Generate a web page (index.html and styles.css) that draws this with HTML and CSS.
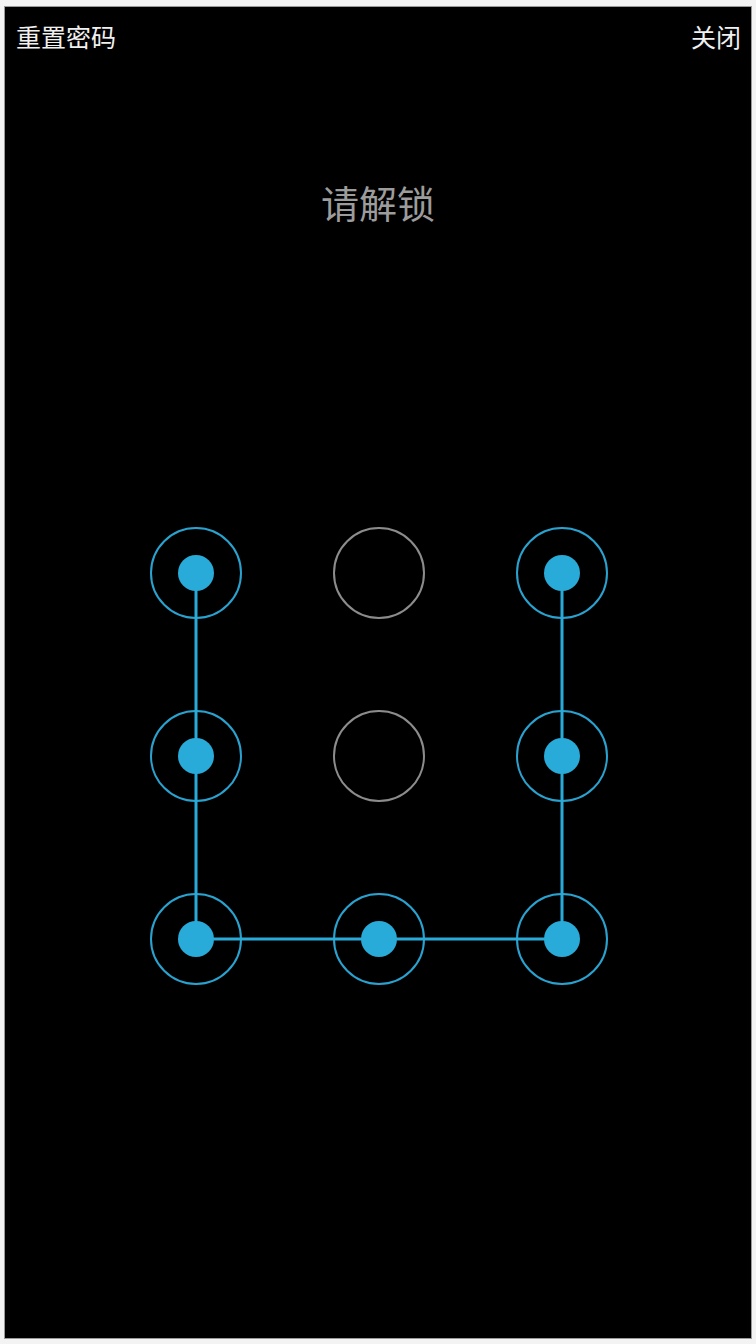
FILE: index.html
```html
<!DOCTYPE html>
<html lang="zh">
<head>
<meta charset="utf-8">
<title>请解锁</title>
<link rel="stylesheet" href="styles.css">
</head>
<body>
<div class="screen">
  <div class="header">
    <span class="action">重置密码</span>
    <span class="action">关闭</span>
  </div>
  <div class="title">请解锁</div>
  <div class="pattern">
    <svg class="lines" width="458" height="458" viewBox="0 0 458 458">
      <path d="M46 46 V412 H412 V46" fill="none" stroke="#29abd9" stroke-width="3"/>
    </svg>
    <div class="node on"></div>
    <div class="node"></div>
    <div class="node on"></div>
    <div class="node on"></div>
    <div class="node"></div>
    <div class="node on"></div>
    <div class="node on"></div>
    <div class="node on"></div>
    <div class="node on"></div>
  </div>
</div>
</body>
</html>
```
FILE: styles.css
```css
html, body {
  margin: 0;
  padding: 0;
  background: #f3f3f3;
}
body {
  width: 756px;
  height: 1344px;
  overflow: hidden;
  font-family: "Noto Sans CJK SC", "Noto Sans", sans-serif;
}
.screen {
  margin: 7px 5px 0 5px;
  height: 1331px;
  background: #000;
  box-shadow: 0 0 0 1px #9a9a9a;
  display: flex;
  flex-direction: column;
}
.header {
  display: flex;
  justify-content: space-between;
  padding: 17px 10px 0 11px;
  font-size: 25px;
  line-height: 25px;
  color: #f0f0f0;
}
.title {
  margin-top: 134px;
  text-align: center;
  font-size: 38px;
  line-height: 38px;
  color: #9c9c9c;
}
.pattern {
  position: relative;
  margin: 306px 0 0 145px;
  width: 458px;
  height: 458px;
  display: grid;
  grid-template-columns: repeat(3, 92px);
  grid-template-rows: repeat(3, 92px);
  gap: 91px;
}
.lines {
  position: absolute;
  left: 0;
  top: 0;
  z-index: 1;
}
.node {
  position: relative;
  box-sizing: border-box;
  width: 92px;
  height: 92px;
  border: 2px solid #8c8c8c;
  border-radius: 50%;
}
.node.on {
  border-color: #2aa2cf;
}
.node.on::after {
  content: "";
  position: absolute;
  left: 50%;
  top: 50%;
  width: 36px;
  height: 36px;
  margin: -18px 0 0 -18px;
  border-radius: 50%;
  background: #29abd9;
  z-index: 2;
}
```
